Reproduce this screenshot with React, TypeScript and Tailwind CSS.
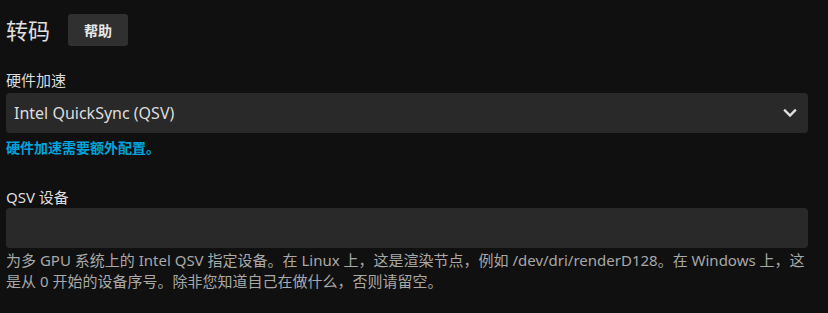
import * as React from "react";

const font = { fontFamily: '"Noto Sans", "Noto Sans CJK SC", sans-serif' };

function ChevronDown() {
  return (
    <svg width="14" height="10" viewBox="0 0 14 10" fill="none" stroke="currentColor" strokeWidth="2.4" strokeLinecap="square" aria-hidden="true">
      <path d="M2 2.5l5 5 5-5" />
    </svg>
  );
}

export default function App() {
  return (
    <div className="min-h-[313px] w-full bg-[#101010] text-[#dddddd]" style={font}>
      <div className="ml-[6px] w-[802px] pt-[14px]">
        {/* Section header */}
        <div className="flex h-[32px] items-center">
          <h2 className="text-[22px] leading-none font-normal text-[#e0e0e0]">转码</h2>
          <button className="ml-[18px] h-[32px] w-[60px] rounded-[3px] bg-[#303030] text-[14px] font-bold text-[#e8e8e8]">
            帮助
          </button>
        </div>

        {/* Hardware acceleration */}
        <label className="mt-[24px] block text-[15px] leading-[20px] text-[#dddddd]">硬件加速</label>
        <div className="mt-[3px] flex h-[40px] items-center justify-between rounded-[4px] bg-[#292929] pl-[8px] pr-[11px]">
          <span className="text-[16px] text-[#dddddd]">Intel QuickSync (QSV)</span>
          <span className="text-[#e0e0e0]">
            <ChevronDown />
          </span>
        </div>
        <p className="mt-[5px] text-[14px] leading-[20px] font-bold text-[#00a4dc]">硬件加速需要额外配置。</p>

        {/* QSV device */}
        <label className="mt-[29px] block text-[15px] leading-[20px] text-[#dddddd]">QSV 设备</label>
        <div className="mt-[1px] h-[40px] rounded-[4px] bg-[#292929]" />
        <p className="mt-[2px] text-[15px] leading-[21px] text-[#a8a8a8]">
          为多 GPU 系统上的 Intel QSV 指定设备。在 Linux 上，这是渲染节点，例如 /dev/dri/renderD128。在 Windows 上，这是从 0 开始的设备序号。除非您知道自己在做什么，否则请留空。
        </p>
      </div>
    </div>
  );
}
